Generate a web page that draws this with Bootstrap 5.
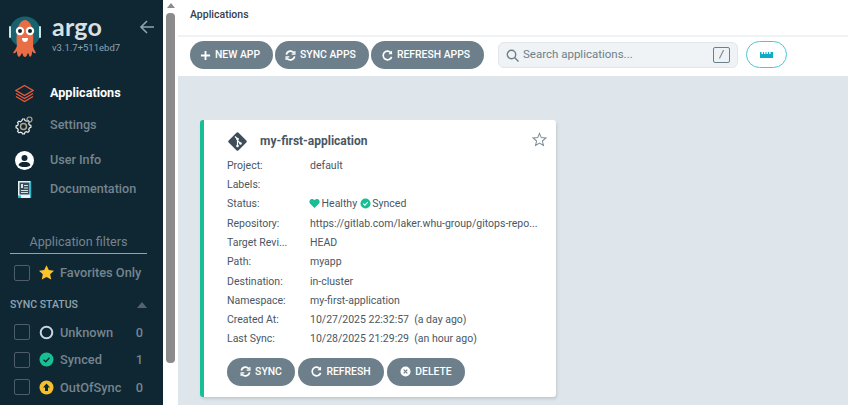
<!DOCTYPE html>
<html lang="en">
<head>
<meta charset="utf-8">
<title>Argo CD</title>
<link rel="stylesheet" href="https://cdn.jsdelivr.net/npm/bootstrap@5.3.0/dist/css/bootstrap.min.css">
<style>
html,body{height:405px;overflow:hidden;margin:0}
body{font-family:Roboto,"Liberation Sans",sans-serif;font-size:13px;color:#495763;background:#fff}
.shell{height:405px;width:848px}
.side{width:163px;height:405px;background:#0f2733;overflow:hidden;flex:none;color:#8fa4b1}
.brand{height:68px;padding:15px 0 0 9px;position:relative}
.brand svg.fish{width:33px;height:44px;flex:none}
.brandtext{margin-left:10px}
.word{font-family:Lato,Roboto,sans-serif;color:#d9dfe2;font-size:25px;line-height:25px;font-weight:700;margin-top:-1px;letter-spacing:.2px}
.ver{font-size:9.5px;line-height:12px;color:#8fa4b1;margin-top:3px}
.back{position:absolute;left:139px;top:19px;width:16px;height:16px}
.nav-item-x{display:flex;align-items:center;font-size:12.6px;color:#75848e;font-weight:500;padding-left:15px}
.nav-item-x span{margin-left:16px}
.nav-item-x svg{width:19px;height:19px;flex:none}
.nav-item-x.on{color:#fff;font-weight:700}
.n1{height:26px;margin-top:12px}.n2{height:26px;margin-top:6px}.n3{height:26px;margin-top:9px}.n4{height:26px;margin-top:3px}
.fhead{margin:30px 16px 0 10px;padding-bottom:1px;border-bottom:1px solid #8fa4b1;text-align:center;font-size:12.6px;line-height:20px;color:#75848e}
.frow{display:flex;align-items:center;height:27.5px;padding-left:14px;font-size:12.8px;color:#75848e;font-weight:500;position:relative}
.favrow{margin-top:5px}
.box{width:16px;height:16px;border:1px solid #4d5e69;border-radius:2px;flex:none;margin-right:9px}
.frow svg{width:15px;height:15px;flex:none;margin-right:6px}
.frow b{font-weight:500;position:absolute;left:135px;width:9px;text-align:center}
.shead{display:flex;justify-content:space-between;align-items:center;margin:4px 16px 0 10px;height:28px;font-size:10.5px;font-weight:500;color:#8fa4b1}
.caret{width:0;height:0;border-left:5px solid transparent;border-right:5px solid transparent;border-bottom:6px solid #56636c}
.sbar{width:15px;height:405px;background:#fff;flex:none;padding:0 3px}
.sarrow{width:0;height:0;border-left:4px solid transparent;border-right:4px solid transparent;border-bottom:5px solid #8b8b8b;margin:3px auto 5px}
.sthumb{width:9px;height:350px;background:#8b8b8b;border-radius:4px}
.mainx{width:670px;height:405px;background:#dee6eb;overflow:hidden}
.crumb{height:35px;background:#fff;padding:8px 12px;font-size:10.5px;line-height:14px;font-weight:500;color:#363c4a}
.tools{height:41px;background:#fff;border-top:2px solid #eff3f5;padding:4px 12px 0;align-items:flex-start;gap:2px}
.pill{height:28px;border-radius:14px;background:#6d7f8b;color:#fff;border:0;font-size:10.4px;font-weight:500;padding:0;display:flex;align-items:center;justify-content:center;white-space:nowrap}
.tools .pill{padding-right:3px}
.pill svg{width:11px;height:11px;margin-right:4px;flex:none}
.w1{width:83px}.w2{width:94px}.w3{width:113px}
.w4{width:68px}.w5{width:86px}.w6{width:78px}
.search{width:240px;height:26px;margin-left:12px;margin-top:1px;background:#eff3f5;border:1px solid #e1e7eb;border-radius:6px;display:flex;align-items:center;padding:0 7px;font-size:11.5px;color:#6d7f8b}
.search svg{width:13px;height:13px;margin-right:4px;flex:none}
.kbd{margin-left:auto;width:17px;height:16px;border:1px solid #6d7f8b;border-radius:2px;font-size:10px;line-height:14px;text-align:center;font-style:italic;color:#495763}
.ruler{width:41px;height:27px;margin-left:6px;border:1px solid #44c9d9;border-radius:14px;background:#fff;display:flex;align-items:center;justify-content:center}
.appcard{width:356px;height:277px;margin:44px 0 0 22px;background:#fff;border-left:4px solid #18be94;border-radius:3px;box-shadow:1px 2px 3px rgba(0,0,0,.12);padding:10px 0 0 23px;position:relative}
.title{height:22px;display:flex;align-items:center;font-size:12px;font-weight:700;color:#495763}
.title svg{width:21px;height:21px;margin-right:12px;flex:none}
.star{position:absolute;left:328px;top:12px;width:15px;height:15px}
.rowx{display:flex;height:19.3px;align-items:center;font-size:10.5px;color:#495763;white-space:nowrap}
.first{margin-top:4px}
.rowx>span:first-child{width:83px;flex:none}
.rowx>span:last-child{width:240px}
.rowx svg{width:11px;height:11px;vertical-align:-2px;margin-right:-1px}
.rowx svg:first-child{margin-left:-1px}
.acts{margin-top:9px;gap:3px}
</style>
</head>
<body>
<div class="shell d-flex">
  <aside class="side">
    <div class="brand d-flex">
      <svg class="fish" viewBox="0 0 33 44">
        <circle cx="16" cy="17" r="15.500" fill="#17626f"/>
        <rect x="0" y="11" width="2" height="12" rx="1" fill="#cfe3e6"/>
        <rect x="30" y="11" width="2" height="12" rx="1" fill="#cfe3e6"/>
        <path d="M8 30C7 20 8 6 16 5c8 1 9 15 8 25 0 3 2 6 3 8-2 1-3-1-4-2 0 2 0 5-2 6-1-1-1-3-2-4-1 1-1 4-3 4-2 0-2-3-3-4-1 1-1 3-3 4-2-1-2-4-2-6-1 1-2 3-4 2 1-2 4-5 4-8z" fill="#e96d45"/>
        <circle cx="11" cy="16" r="4.200" fill="#fff"/><circle cx="21" cy="16" r="4.200" fill="#fff"/>
        <circle cx="11" cy="16" r="2" fill="#17262e"/><circle cx="21" cy="16" r="2" fill="#17262e"/>
        <path d="M13 23h6c0 3-1.500 4-3 4s-3-1-3-4z" fill="#fff"/>
      </svg>
      <div class="brandtext">
        <div class="word">argo</div>
        <div class="ver">v3.1.7+511ebd7</div>
      </div>
      <svg class="back" viewBox="0 0 16 16" fill="none" stroke="#8fa4b1" stroke-width="1.600"><path d="M15 8H2M8 2 2 8l6 6"/></svg>
    </div>
    <div class="nav-item-x on n1">
      <svg viewBox="0 0 19 19" fill="none" stroke="#f0583a" stroke-width="1.300"><path d="M9.500 1.500 18 6.500 9.500 11.500 1 6.500z"/><path d="M1 9.500 9.500 14.500 18 9.500"/><path d="M1 12.500 9.500 17.500 18 12.500"/></svg>
      <span>Applications</span>
    </div>
    <div class="nav-item-x n2">
      <svg viewBox="0 0 19 19" fill="none" stroke="#e8eef1" stroke-width="1.200"><path d="M7 4.500 7.500 3h2l.5 1.500 1.500.7 1.500-.7 1.400 1.400-.7 1.500.7 1.500 1.500.5v2l-1.500.5-.7 1.500.7 1.500-1.400 1.400-1.500-.7-1.500.7-.5 1.500h-2L7 16.800l-1.500-.7-1.500.7-1.400-1.400.7-1.500-.7-1.500-1.500-.5v-2l1.500-.5.700-1.500-.7-1.500L4 5.200l1.500.7z"/><circle cx="8.500" cy="10.500" r="3" stroke="#b5a58a" stroke-width="1.500"/><circle cx="14.500" cy="3.500" r="2.500" stroke="#b5a58a"/></svg>
      <span>Settings</span>
    </div>
    <div class="nav-item-x n3">
      <svg viewBox="0 0 19 19"><circle cx="9.500" cy="9.500" r="9.500" fill="#fff"/><circle cx="9.500" cy="7" r="3" fill="#0f2733"/><path d="M3.500 14c1-2.500 3-3 6-3s5 .5 6 3c-1 1.500-3 2-6 2s-5-.5-6-2z" fill="#0f2733"/></svg>
      <span>User Info</span>
    </div>
    <div class="nav-item-x n4">
      <svg viewBox="0 0 19 19"><rect x="3" y="1" width="13" height="17" fill="#e9f3f6"/><rect x="4.500" y="2.500" width="10" height="12" fill="#3a4c58"/><path d="M6 4h2v4H6zM9 5h4v1H9zM9 7.500h4v1H9zM6 10h7v1H6zM6 12h7v1H6z" fill="#cfe3e6"/><rect x="3" y="15.500" width="3" height="2.500" fill="#2fb6cc"/><rect x="15" y="1" width="1.200" height="17" fill="#2fb6cc"/></svg>
      <span>Documentation</span>
    </div>
    <div class="fhead">Application filters</div>
    <div class="frow favrow"><i class="box"></i>
      <svg viewBox="0 0 15 15"><path d="M7.500.2 9.800 5l5.200.7-3.800 3.600 1 5.300-4.700-2.600-4.700 2.600 1-5.300L0 5.700 5.200 5z" fill="#fdc32a"/></svg>
      Favorites Only</div>
    <div class="shead"><span>SYNC STATUS</span><i class="caret"></i></div>
    <div class="frow"><i class="box"></i>
      <svg viewBox="0 0 15 15" fill="none"><circle cx="7.500" cy="7.500" r="5.800" stroke="#c7d7e0" stroke-width="2"/></svg>
      Unknown<b>0</b></div>
    <div class="frow"><i class="box"></i>
      <svg viewBox="0 0 15 15"><circle cx="7.500" cy="7.500" r="7" fill="#18be94"/><path d="m4.500 7.800 2.200 2 3.800-4" fill="none" stroke="#0f2733" stroke-width="1.300"/></svg>
      Synced<b>1</b></div>
    <div class="frow"><i class="box"></i>
      <svg viewBox="0 0 15 15"><circle cx="7.500" cy="7.500" r="7" fill="#f4c030"/><path d="M7.500 3.500 11 7.500H9v3.500H6V7.500H4z" fill="#0f2733"/></svg>
      OutOfSync<b>0</b></div>
  </aside>
  <div class="sbar"><div class="sarrow"></div><div class="sthumb"></div></div>
  <main class="mainx">
    <div class="crumb">Applications</div>
    <div class="tools d-flex">
      <button class="pill w1"><svg viewBox="0 0 12 12"><path d="M5 1h2v4h4v2H7v4H5V7H1V5h4z" fill="#fff"/></svg>NEW APP</button>
      <button class="pill w2"><svg viewBox="0 0 12 12" fill="none" stroke="#fff" stroke-width="1.800"><path d="M1.500 5A4.600 4.600 0 0 1 10 3.500M10.500 7A4.600 4.600 0 0 1 2 8.500"/><path d="M10.800 1v3.500H7.300M1.200 11V7.500h3.500" stroke-width="1.300"/></svg>SYNC APPS</button>
      <button class="pill w3"><svg viewBox="0 0 12 12" fill="none" stroke="#fff" stroke-width="1.800"><path d="M10.500 7.500A4.700 4.700 0 1 1 9.500 2.800"/><path d="M11 .5v4H7z" fill="#fff" stroke="none"/></svg>REFRESH APPS</button>
      <div class="search"><svg viewBox="0 0 13 13" fill="none" stroke="#6d7f8b" stroke-width="1.400"><circle cx="5.500" cy="5.500" r="4.200"/><path d="m8.500 8.500 4 4"/></svg>Search applications...<span class="kbd">/</span></div>
      <div class="ruler"><svg width="13" height="6" viewBox="0 0 13 6"><path d="M0 0h1.500v2H3V0h1v2h1.500V0h1v2H8V0h1v2h1.500V0H13v6H0z" fill="#0dadc7"/></svg></div>
    </div>
    <article class="appcard">
      <div class="title">
        <svg viewBox="0 0 21 21"><rect x="3.500" y="3.500" width="14" height="14" rx="1.500" transform="rotate(45 10.500 10.500)" fill="#3e4d59"/><path d="M8 5.500 10.500 8v7M10.500 9.500l3 3" stroke="#fff" stroke-width="1.200" fill="none"/><circle cx="10.500" cy="8" r="1.300" fill="#fff"/><circle cx="13.500" cy="12.500" r="1.300" fill="#fff"/><circle cx="10.500" cy="15" r="1.300" fill="#fff"/></svg>
        my-first-application
      </div>
      <svg class="star" viewBox="0 0 16 16" fill="none" stroke="#7f8e99" stroke-width="1.100"><path d="M8 1.500 9.900 6l4.900.4-3.700 3.200 1.100 4.800L8 11.900l-4.200 2.500 1.100-4.800L1.200 6.400 6.100 6z"/></svg>
      <div class="rowx first"><span>Project:</span><span>default</span></div>
      <div class="rowx"><span>Labels:</span><span></span></div>
      <div class="rowx"><span>Status:</span><span><svg viewBox="0 0 12 12"><path d="M6 11 1 6C-.500 3.500 1 1 3.200 1 4.500 1 5.500 1.700 6 2.500 6.500 1.700 7.500 1 8.800 1 11 1 12.500 3.500 11 6z" fill="#18be94"/></svg> Healthy <svg viewBox="0 0 12 12"><circle cx="6" cy="6" r="5.500" fill="#18be94"/><path d="m3.500 6.200 1.800 1.700 3.200-3.400" fill="none" stroke="#fff" stroke-width="1.200"/></svg> Synced</span></div>
      <div class="rowx"><span>Repository:</span><span>https://gitlab.com/laker.whu-group/gitops-repo...</span></div>
      <div class="rowx"><span>Target Revi...</span><span>HEAD</span></div>
      <div class="rowx"><span>Path:</span><span>myapp</span></div>
      <div class="rowx"><span>Destination:</span><span>in-cluster</span></div>
      <div class="rowx"><span>Namespace:</span><span>my-first-application</span></div>
      <div class="rowx"><span>Created At:</span><span>10/27/2025 22:32:57&nbsp; (a day ago)</span></div>
      <div class="rowx"><span>Last Sync:</span><span>10/28/2025 21:29:29&nbsp; (an hour ago)</span></div>
      <div class="acts d-flex">
        <button class="pill w4"><svg viewBox="0 0 12 12" fill="none" stroke="#fff" stroke-width="1.800"><path d="M1.500 5A4.600 4.600 0 0 1 10 3.500M10.500 7A4.600 4.600 0 0 1 2 8.500"/><path d="M10.800 1v3.500H7.300M1.200 11V7.500h3.500" stroke-width="1.300"/></svg>SYNC</button>
        <button class="pill w5"><svg viewBox="0 0 12 12" fill="none" stroke="#fff" stroke-width="1.800"><path d="M10.500 7.500A4.700 4.700 0 1 1 9.500 2.800"/><path d="M11 .5v4H7z" fill="#fff" stroke="none"/></svg>REFRESH</button>
        <button class="pill w6"><svg viewBox="0 0 12 12"><circle cx="6" cy="6" r="5.500" fill="#fff"/><path d="m4 4 4 4M8 4l-4 4" stroke="#6d7f8b" stroke-width="1.300"/></svg>DELETE</button>
      </div>
    </article>
  </main>
</div>
</body>
</html>
